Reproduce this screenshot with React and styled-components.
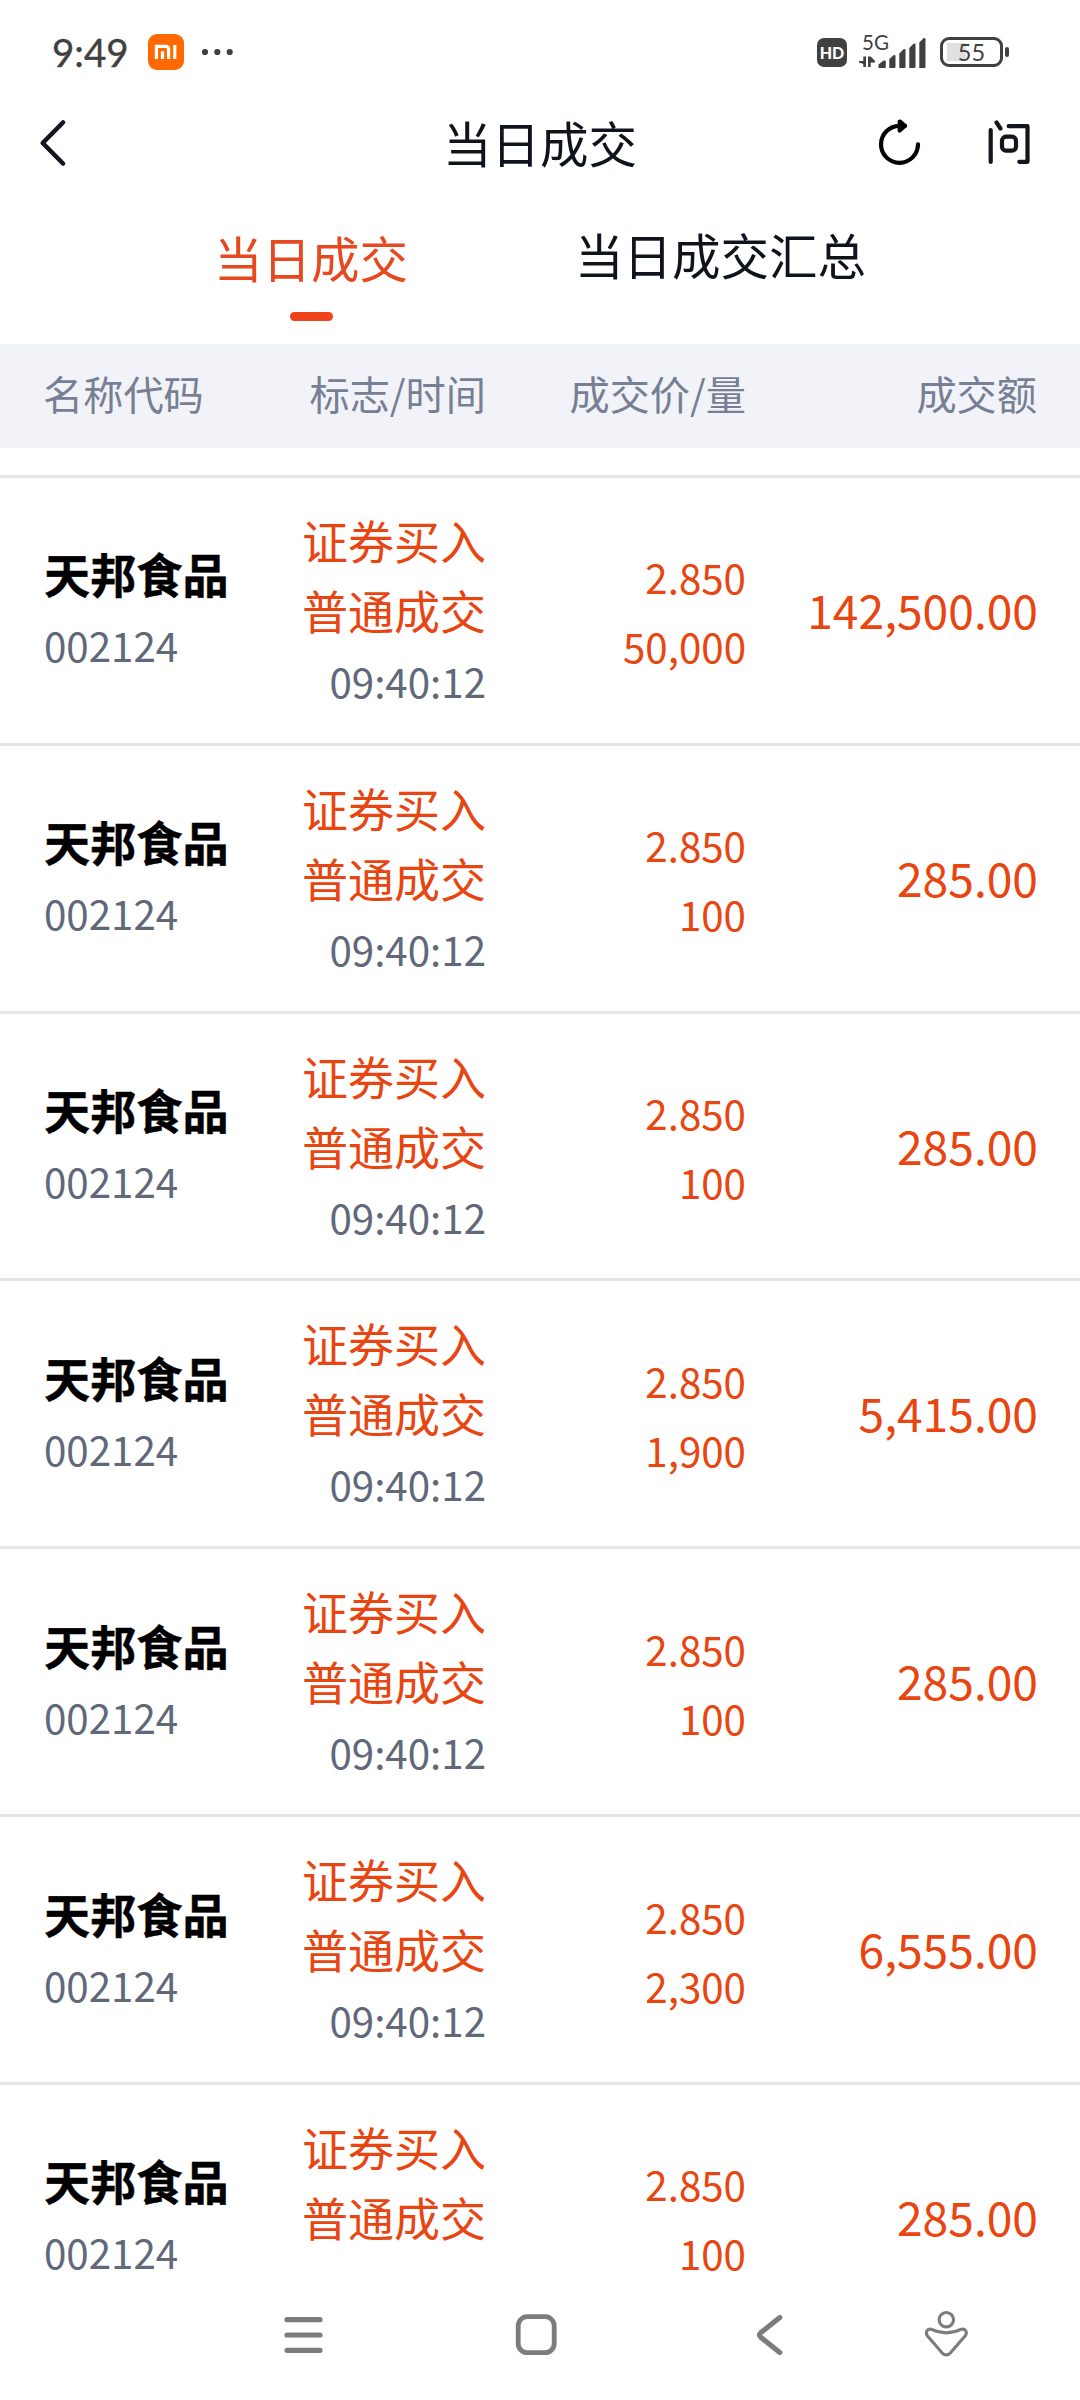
import React, { useState } from "react";
import styled, { createGlobalStyle } from "styled-components";

const GlobalStyle = createGlobalStyle`
  * {
    box-sizing: border-box;
  }
  body {
    margin: 0;
    background: #fff;
    font-family: "Noto Sans CJK SC", sans-serif;
  }
`;

const Screen = styled.div`
  display: flex;
  flex-direction: column;
  width: 1080px;
  height: 2400px;
  overflow: hidden;
  background: #fff;
`;

const StatusBar = styled.div`
  display: flex;
  align-items: center;
  flex: none;
  height: 104px;
  padding: 0 77px 0 52px;
  color: #404040;
`;

const Clock = styled.span`
  width: 96px;
  font-family: Lato, sans-serif;
  font-size: 38.5px;
  line-height: 48px;
  white-space: nowrap;
  -webkit-text-stroke: 0.4px #404040;
`;

const StatusIcons = styled.svg`
  display: block;
  flex: none;
`;

const Spacer = styled.div`
  flex: 1;
`;

const HdBadge = styled.span`
  width: 30px;
  height: 29px;
  margin-right: 12px;
  border-radius: 7px;
  background: #404040;
  color: #fff;
  font-family: Lato, sans-serif;
  font-size: 16px;
  font-weight: 900;
  line-height: 29px;
  text-align: center;
`;

const Signal = styled.div`
  position: relative;
  width: 67px;
  height: 34px;
  margin-right: 14px;
`;

const NetworkType = styled.span`
  position: absolute;
  left: 3px;
  top: -5px;
  font-family: Lato, sans-serif;
  font-size: 20.5px;
  line-height: 24px;
`;

const Battery = styled.div`
  position: relative;
  width: 63px;
  height: 30px;
  border: 3px solid #404040;
  border-radius: 9px;
  font-family: Lato, sans-serif;
  font-size: 23.5px;
  line-height: 25px;
  text-align: center;
  background: linear-gradient(#e0e0e0, #e0e0e0) 4px 3px / 19px 18px no-repeat;

  &::after {
    content: "";
    position: absolute;
    right: -9px;
    top: 7px;
    width: 4px;
    height: 10px;
    border-radius: 2px;
    background: #404040;
  }
`;

const TitleBar = styled.header`
  display: grid;
  grid-template-columns: 240px 1fr 240px;
  flex: none;
  height: 80px;
`;

const Title = styled.h1`
  margin: 0;
  color: #0f131c;
  font-size: 48.5px;
  font-weight: 400;
  line-height: 77px;
  text-align: center;
`;

const Actions = styled.div`
  display: flex;
  gap: 65px;
  padding: 12px 0 0 37px;
`;

const BackButton = styled.div`
  padding: 12px 0 0 34px;
`;

const Tabs = styled.nav`
  display: flex;
  flex: none;
  height: 160px;
  padding: 36px 0 0 214px;
  gap: 167px;
`;

const Tab = styled.div`
  display: flex;
  flex-direction: column;
  align-items: center;
  padding-top: ${(p) => (p.$active ? 3 : 0)}px;
  color: ${(p) => (p.$active ? "#e6481f" : "#0f131c")};
  font-size: 48.5px;
  line-height: 68px;

  &::after {
    content: "";
    display: ${(p) => (p.$active ? "block" : "none")};
    width: 43px;
    height: 9px;
    margin-top: 21px;
    border-radius: 4.5px;
    background: #f0421b;
  }
`;

const columns = "200px 243px 260px 291px";

const TableHead = styled.div`
  display: grid;
  grid-template-columns: ${columns};
  flex: none;
  height: 104px;
  margin-bottom: 27px;
  padding: 0 43px;
  background: #f2f3f8;
  color: #777f94;
  font-size: 40.2px;
  line-height: 97px;
`;

const HeadCell = styled.span`
  text-align: ${(p) => (p.$left ? "left" : "right")};
`;

const List = styled.div`
  flex: none;
  height: 1796px;
  overflow: hidden;
`;

const Row = styled.div`
  display: grid;
  grid-template-columns: ${columns};
  align-items: center;
  height: 267.83px;
  padding: 0 42px 0 43px;
  border-top: 3px solid #e3e5ea;
`;

const Cell = styled.div`
  display: flex;
  flex-direction: column;
  align-items: flex-end;
  white-space: nowrap;
  color: #e84510;
`;

const StockCell = styled(Cell)`
  align-items: flex-start;
  padding: 0 0 3px 1px;
`;

const StockName = styled.span`
  color: #000;
  font-size: 46.2px;
  font-weight: 700;
  line-height: 72px;
  -webkit-text-stroke: 0.4px #000;
`;

const StockCode = styled.span`
  color: #606879;
  font-size: 40.3px;
  line-height: 71px;
`;

const Flag = styled.span`
  font-size: 46px;
  line-height: 70px;
`;

const Time = styled.span`
  color: #606879;
  font-size: 40.3px;
  line-height: 73px;
`;

const Price = styled.span`
  font-size: 40.3px;
  line-height: 69px;

  &:first-child {
    margin-top: 2px;
  }
`;

const Amount = styled.span`
  margin-top: -3px;
  margin-right: -1px;
  font-size: 46.2px;
  line-height: 70px;
`;

const NavBar = styled.footer`
  flex: none;
  height: 129px;
  background: #fff;
`;

const trades = [
  { qty: "50,000", amount: "142,500.00" },
  { qty: "100", amount: "285.00" },
  { qty: "100", amount: "285.00" },
  { qty: "1,900", amount: "5,415.00" },
  { qty: "100", amount: "285.00" },
  { qty: "2,300", amount: "6,555.00" },
  { qty: "100", amount: "285.00" },
];

const tabs = ["当日成交", "当日成交汇总"];

function Status() {
  return (
    <StatusBar>
      <Clock>9:49</Clock>
      <StatusIcons width="90" height="36" viewBox="0 0 90 36">
        <rect width="36" height="36" rx="9" fill="#ff6900" />
        <path
          d="M8.4 25V12.4h9.2q3 0 3 3V25M14.5 17.2V25M26.8 11v14"
          fill="none"
          stroke="#fff"
          strokeWidth="3.2"
        />
        <g fill="#404040">
          <circle cx="57" cy="18" r="3.1" />
          <circle cx="69.3" cy="18" r="3.1" />
          <circle cx="81.7" cy="18" r="3.1" />
        </g>
      </StatusIcons>
      <Spacer />
      <HdBadge>HD</HdBadge>
      <Signal>
        <NetworkType>5G</NetworkType>
        <StatusIcons width="67" height="34" viewBox="0 0 67 34" fill="#404040">
          <path d="M4.3 21.500h2.700V32H4.300v-3L0 27.500v-1.500h4.300zM9 32V21.500h2.700l4.300 4.500v1.500h-4.300V32z" />
          <path d="M19.500 33v-3.500l5-4h1.300q1 0 1 1V32q0 1-1 1zM30.300 33V24l4.500-4h.7q1 0 1 1v11q0 1-1 1zM40.300 33V18.500l4.500-4.500h.7q1 0 1 1v17q0 1-1 1zM50.300 33V13l4.500-4.500h.7q1 0 1 1V32q0 1-1 1zM60.300 33V7.500l4.500-4.500h.7q1 0 1 1v28q0 1-1 1z" />
        </StatusIcons>
      </Signal>
      <Battery>55</Battery>
    </StatusBar>
  );
}

function TradeRow({ qty, amount }) {
  return (
    <Row>
      <StockCell>
        <StockName>天邦食品</StockName>
        <StockCode>002124</StockCode>
      </StockCell>
      <Cell>
        <Flag>证券买入</Flag>
        <Flag>普通成交</Flag>
        <Time>09:40:12</Time>
      </Cell>
      <Cell>
        <Price>2.850</Price>
        <Price>{qty}</Price>
      </Cell>
      <Cell>
        <Amount>{amount}</Amount>
      </Cell>
    </Row>
  );
}

export default function App() {
  const [active, setActive] = useState(0);

  return (
    <Screen>
      <GlobalStyle />
      <Status />
      <TitleBar>
        <BackButton>
          <svg width="40" height="56" viewBox="0 0 40 56" fill="none" stroke="#12151c" strokeWidth="4.6" strokeLinecap="round" strokeLinejoin="round">
            <path d="M29 6.500L8.700 27L29 47.500" />
          </svg>
        </BackButton>
        <Title>当日成交</Title>
        <Actions>
          <svg width="46" height="56" viewBox="0 0 46 56" fill="none" stroke="#000" strokeWidth="4.200" strokeLinecap="round" strokeLinejoin="round">
            <path d="M41 28.300A18.500 18.500 0 1 1 22.500 9.800H28" />
            <path d="M22.700 5.500L28 9.800L22.700 14.500z" />
          </svg>
          <svg width="46" height="56" viewBox="0 0 46 56" fill="none" stroke="#12161c" strokeWidth="4.200" strokeLinecap="round" strokeLinejoin="round">
            <path d="M2.700 14V46M8.500 6.500L12.500 12.500M20.700 10.200H39.500V45.800H31.300" />
            <rect x="14" y="20.700" width="14" height="14" rx="4" />
          </svg>
        </Actions>
      </TitleBar>
      <Tabs>
        {tabs.map((name, i) => (
          <Tab key={name} $active={i === active} onClick={() => setActive(i)}>
            {name}
          </Tab>
        ))}
      </Tabs>
      <TableHead>
        <HeadCell $left>名称代码</HeadCell>
        <HeadCell>标志/时间</HeadCell>
        <HeadCell>成交价/量</HeadCell>
        <HeadCell>成交额</HeadCell>
      </TableHead>
      <List>
        {trades.map((trade, i) => (
          <TradeRow key={i} {...trade} />
        ))}
      </List>
      <NavBar>
        <svg width="1080" height="129" viewBox="0 1 1080 129" fill="none" stroke="#7c7c7c" strokeWidth="5.200" strokeLinecap="round" strokeLinejoin="round">
          <path d="M287 49.700H320M287 65H320M287 80.300H320" />
          <rect x="518.200" y="46.700" width="36" height="36" rx="9" strokeWidth="4.800" />
          <path d="M779.800 47.500L761 62.500Q758 65 761 67.500L779.800 82.500" />
          <g strokeWidth="3.100">
            <circle cx="946.300" cy="49.700" r="7.200" />
            <path d="M931 59.200Q946.300 66.500 961.500 59.200C965.500 58.500 967.500 62 965.500 65.500L950.500 82.800Q946.300 87 942 82.800L927.500 66C925 62.500 927 58.500 931 59.200Z" />
          </g>
        </svg>
      </NavBar>
    </Screen>
  );
}
